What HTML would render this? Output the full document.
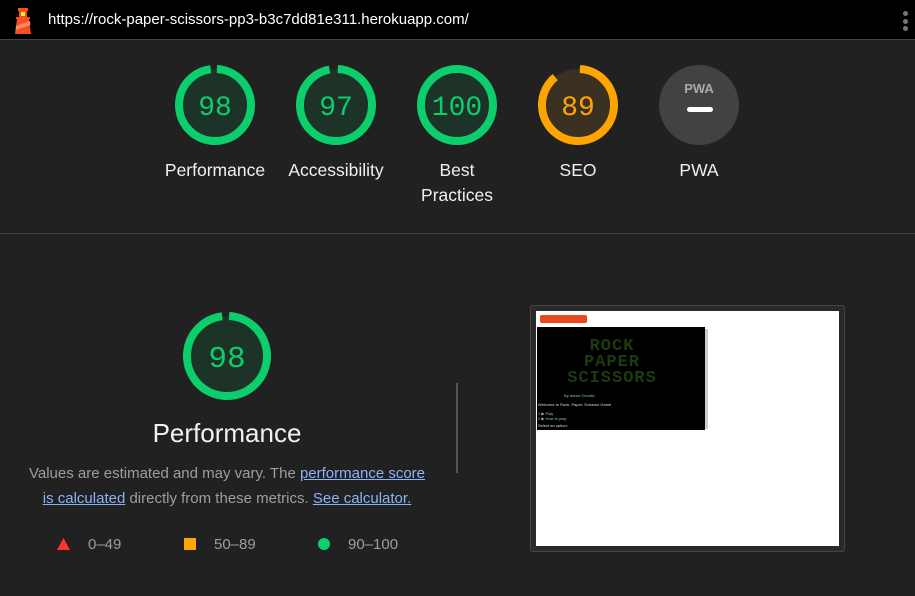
<!DOCTYPE html>
<html><head><meta charset="utf-8"><style>
*{margin:0;padding:0;box-sizing:border-box}
body{width:915px;height:596px;background:#212121;font-family:"Liberation Sans",sans-serif;position:relative;overflow:hidden;color:#eee}
.hdr{position:absolute;left:0;top:0;width:915px;height:40px;background:#000;border-bottom:1px solid #444}
.url{position:absolute;left:48px;top:11px;font-size:15px;color:#fff}
.dots{position:absolute;left:903px;top:11px}
.dots i{display:block;width:5px;height:5px;border-radius:3px;background:#777;margin-bottom:2.5px}
.g{position:absolute}
.lab{position:absolute;width:120px;text-align:center;font-size:17.5px;color:#f0f0f0;line-height:25px}
.hr{position:absolute;left:0;top:233px;width:915px;height:1px;background:#444}
.vr{position:absolute;left:456px;top:383px;width:2px;height:90px;background:#555}
.desc{position:absolute;left:20px;top:462px;width:414px;text-align:center;font-size:15px;line-height:24.5px;color:#9e9e9e}
.desc a{color:#8ab4f8;text-decoration:underline}
.leg{position:absolute;top:536px;font-size:15px;color:#9e9e9e}
</style></head><body>
<div class="hdr">
<svg style="position:absolute;left:12px;top:6px" width="22" height="28" viewBox="0 0 22 28">
<rect x="6" y="2" width="10" height="3" fill="#f4511e"/>
<rect x="7" y="5" width="8" height="6" fill="#f4511e"/><rect x="9" y="6" width="4" height="4" fill="#ffeb3b"/>
<rect x="4" y="11" width="14" height="2" fill="#f4511e"/>
<polygon points="5,13 17,13 19,28 3,28" fill="#f4511e"/>
<polygon points="4,20 18,15 18.4,19 3.6,24" fill="#ff8a65"/>
</svg>
<div class="url">https://rock-paper-scissors-pp3-b3c7dd81e311.herokuapp.com/</div>
<div class="dots"><i></i><i></i><i></i></div>
</div>

<svg class="g" style="left:0;top:0" width="915" height="596">
<g font-family="Liberation Mono, monospace" text-anchor="middle">
<circle cx="215" cy="105" r="36" fill="#1d3328" stroke="#0cce6b" stroke-width="8" stroke-dasharray="219.7 300" transform="rotate(-87 215 105)"/>
<text x="215" y="115" font-size="28" fill="#0cce6b">98</text>
<circle cx="336" cy="105" r="36" fill="#1d3328" stroke="#0cce6b" stroke-width="8" stroke-dasharray="217.4 300" transform="rotate(-87 336 105)"/>
<text x="336" y="115" font-size="28" fill="#0cce6b">97</text>
<circle cx="457" cy="105" r="36" fill="#1d3328" stroke="#0cce6b" stroke-width="8"/>
<text x="457" y="115" font-size="28" fill="#0cce6b">100</text>
<circle cx="578" cy="105" r="36" fill="#3a3122" stroke="#ffa400" stroke-width="8" stroke-dasharray="199.3 300" transform="rotate(-87 578 105)"/>
<text x="578" y="115" font-size="28" fill="#ffa400">89</text>
<circle cx="699" cy="105" r="40" fill="#424242"/>
<text x="699" y="93" font-family="Liberation Sans, sans-serif" font-weight="bold" font-size="13" fill="#aaa">PWA</text>
<rect x="687" y="107" width="26" height="5" rx="2.5" fill="#fff"/>
<circle cx="227" cy="356" r="40" fill="#1d3328" stroke="#0cce6b" stroke-width="8" stroke-dasharray="244 300" transform="rotate(-87 227 356)"/>
<text x="227" y="367" font-size="31" fill="#0cce6b">98</text>
</g>
</svg>

<div class="lab" style="left:155px;top:158px">Performance</div>
<div class="lab" style="left:276px;top:158px">Accessibility</div>
<div class="lab" style="left:397px;top:158px">Best<br>Practices</div>
<div class="lab" style="left:518px;top:158px">SEO</div>
<div class="lab" style="left:639px;top:158px">PWA</div>
<div class="hr"></div>

<div style="position:absolute;left:27px;top:418px;width:400px;text-align:center;font-size:26px;color:#f2f2f2">Performance</div>
<div class="desc">Values are estimated and may vary. The <a>performance score<br>is calculated</a> directly from these metrics. <a>See calculator.</a></div>
<svg class="g" style="left:57px;top:538px" width="13" height="13"><polygon points="6.5,0 13,12 0,12" fill="#f33"/></svg>
<div class="leg" style="left:88px">0–49</div>
<div class="g" style="left:184px;top:538px;width:12px;height:12px;background:#ffa400"></div>
<div class="leg" style="left:214px">50–89</div>
<div class="g" style="left:318px;top:538px;width:12px;height:12px;border-radius:6px;background:#0cce6b"></div>
<div class="leg" style="left:348px">90–100</div>
<div class="vr"></div>

<div class="g" style="left:530px;top:305px;width:315px;height:247px;background:#2a2a2a;border:1px solid #444;border-radius:3px">
<div class="g" style="left:5px;top:5px;width:303px;height:235px;background:#fff">
<div class="g" style="left:4px;top:4px;width:47px;height:8px;background:#e8481c;border-radius:2px"></div>
<div class="g" style="left:1px;top:16px;width:168px;height:103px;background:#000"></div>
<div class="g" style="left:169px;top:18px;width:3px;height:100px;background:#ccc"></div>
<div class="g" style="left:28px;top:28px;width:96px;font:bold 17px/16px 'Liberation Mono',monospace;color:#1e3a10;text-align:center;letter-spacing:1px">ROCK<br>PAPER<br>SCISSORS</div>
<div class="g" style="left:28px;top:82px;font-size:4px;color:#8c8">By Aaron Cevallo</div>
<div class="g" style="left:2px;top:91px;font-size:4px;color:#ddd">Welcome to Rock, Paper, Scissors Game</div>
<div class="g" style="left:2px;top:100px;font-size:4px;color:#8c8">1 ▶ Play<br>2 ▶ How to play</div>
<div class="g" style="left:2px;top:112px;font-size:4px;color:#ddd">Select an option:</div>
</div></div>
</body></html>
